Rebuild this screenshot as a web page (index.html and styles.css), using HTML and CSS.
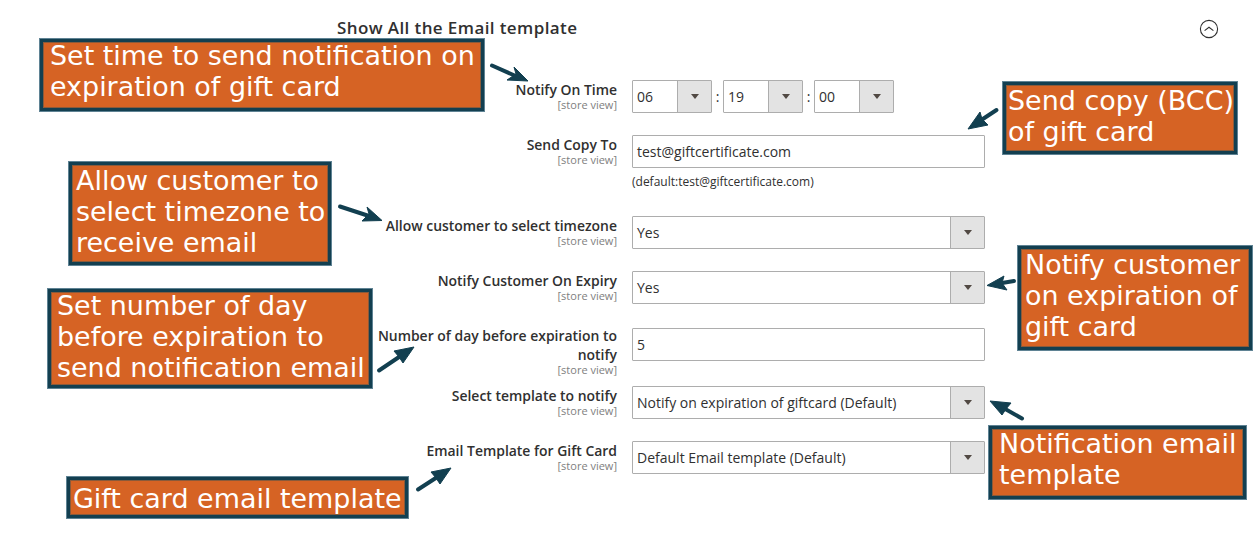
FILE: index.html
```html
<!DOCTYPE html>
<html lang="en">
<head>
    <meta charset="UTF-8">
    <title>Show All the Email template</title>
    <link rel="stylesheet" href="styles.css">
</head>
<body>
    <main class="page">
        <header class="section-head">
            <h2>Show All the Email template</h2>
            <svg class="toggle" width="20" height="20" viewBox="0 0 20 20" fill="none" stroke="#303030">
                <circle cx="10" cy="10" r="8.6" stroke-width="1.1"/>
                <path d="M5.6 11.6 10 8.2l4.4 3.4" stroke-width="1.1"/>
            </svg>
        </header>

        <form class="fields">
            <div class="row">
                <div class="label">Notify On Time<small>[store view]</small></div>
                <div class="control time">
                    <div class="select small"><span>06</span><i></i></div>
                    <b>:</b>
                    <div class="select small"><span>19</span><i></i></div>
                    <b>:</b>
                    <div class="select small"><span>00</span><i></i></div>
                </div>
            </div>
            <div class="row">
                <div class="label">Send Copy To<small>[store view]</small></div>
                <div class="control">
                    <div class="input">test@giftcertificate.com</div>
                    <p class="note">(default:test@giftcertificate.com)</p>
                </div>
            </div>
            <div class="row">
                <div class="label">Allow customer to select timezone<small>[store view]</small></div>
                <div class="control">
                    <div class="select"><span>Yes</span><i></i></div>
                </div>
            </div>
            <div class="row row-expiry">
                <div class="label">Notify Customer On Expiry<small>[store view]</small></div>
                <div class="control">
                    <div class="select"><span>Yes</span><i></i></div>
                </div>
            </div>
            <div class="row row-days">
                <div class="label">Number of day before expiration to notify<small>[store view]</small></div>
                <div class="control">
                    <div class="input">5</div>
                </div>
            </div>
            <div class="row">
                <div class="label">Select template to notify<small>[store view]</small></div>
                <div class="control">
                    <div class="select"><span>Notify on expiration of giftcard (Default)</span><i></i></div>
                </div>
            </div>
            <div class="row">
                <div class="label">Email Template for Gift Card<small>[store view]</small></div>
                <div class="control">
                    <div class="select"><span>Default Email template (Default)</span><i></i></div>
                </div>
            </div>
        </form>
    </main>

    <!-- annotations drawn over the form -->
    <div class="callout c-time"><span>Set time to send notification on<br>expiration of gift card</span></div>
    <div class="callout c-copy"><span>Send copy (BCC)<br>of gift card</span></div>
    <div class="callout c-zone"><span>Allow customer to<br>select timezone to<br>receive email</span></div>
    <div class="callout c-expiry"><span>Notify customer<br>on expiration of<br>gift card</span></div>
    <div class="callout c-days"><span>Set number of day<br>before expiration to<br>send notification email</span></div>
    <div class="callout c-notify"><span>Notification email<br>template</span></div>
    <div class="callout c-gift"><span>Gift card email template</span></div>

    <svg class="arrows" width="1258" height="538" viewBox="0 0 1258 538">
        <g fill="#123f50" stroke="#123f50">
            <path d="M492 65.500 518 77" stroke-width="4" stroke-linecap="round"/>
            <path d="M528 81 514 67 516 74 507 80Z" stroke-width="1"/>
            <path d="M996.500 110 976 123.500" stroke-width="4" stroke-linecap="round"/>
            <path d="M968 129 980 112 982 119 988 125Z" stroke-width="1"/>
            <path d="M340 206.500 372 217" stroke-width="4" stroke-linecap="round"/>
            <path d="M382 220.500 367 207 369 214 362 221Z" stroke-width="1"/>
            <path d="M1014 281 996 284" stroke-width="4" stroke-linecap="round"/>
            <path d="M987 285.500 1004 276 1002 283 1007 290Z" stroke-width="1"/>
            <path d="M1022 418.500 1000 406" stroke-width="4" stroke-linecap="round"/>
            <path d="M990 401 1011 403 1006 409 1002 415Z" stroke-width="1"/>
            <path d="M379 370.500 405 353" stroke-width="4" stroke-linecap="round"/>
            <path d="M414 347 394 351 399 357 403 363Z" stroke-width="1"/>
            <path d="M418 489.500 442 474" stroke-width="4" stroke-linecap="round"/>
            <path d="M451 468 431 472 436 478 440 484Z" stroke-width="1"/>
        </g>
    </svg>
</body>
</html>
```

FILE: styles.css
```css
body {
    margin: 0;
    background-color: #fff;
    font-family: "Open Sans", sans-serif;
    color: #303030;
}

.page {
    width: 1258px;
    height: 538px;
    overflow: hidden;
}

.section-head {
    display: flex;
    justify-content: space-between;
    align-items: center;
    height: 20px;
    padding: 19px 39px 0 337px;
}

.section-head h2 {
    margin: -4px 0 0;
    font-size: 17px;
    font-weight: 600;
    letter-spacing: 0.4px;
}

.fields {
    display: flex;
    flex-direction: column;
    padding-top: 41px;
}

.row {
    display: flex;
    gap: 15px;
    padding-bottom: 22px;
}

.row-expiry {
    padding-bottom: 24px;
}

.row-days {
    padding-bottom: 0;
    height: 58px;
}

.row-days .label {
    margin-top: -2px;
}

.label {
    width: 247px;
    margin-left: 370px;
    text-align: right;
    font-size: 13.950px;
    font-weight: 600;
    line-height: 19px;
}

.label small {
    display: block;
    font-size: 11px;
    font-weight: 400;
    line-height: 11px;
    color: #808080;
}

.control {
    width: 353px;
    font-size: 14px;
}

.time {
    display: flex;
    align-items: flex-start;
}

.time b {
    width: 11px;
    line-height: 33px;
    text-align: center;
    font-weight: 400;
}

.select,
.input {
    display: flex;
    align-items: center;
    box-sizing: border-box;
    height: 33px;
    border: 1px solid #adadad;
    border-radius: 1px;
    background-color: #fff;
}

.select span,
.input {
    padding-left: 4px;
}

.select span {
    flex: 1;
}

.select i {
    display: flex;
    align-items: center;
    justify-content: center;
    box-sizing: border-box;
    width: 34px;
    height: 100%;
    padding-left: 1px;
    border-left: 1px solid #adadad;
    background-color: #e3e3e3;
}

.select i::after {
    content: "";
    border-top: 5px solid #514943;
    border-left: 4px solid transparent;
    border-right: 4px solid transparent;
}

.select.small {
    width: 80px;
}

.note {
    margin: 6px 0 5px;
    font-size: 12px;
    line-height: 15px;
}

.callout {
    position: absolute;
    box-sizing: border-box;
    border: 4px solid #133f50;
    outline: 1px solid #5f8394;
    outline-offset: -1px;
    box-shadow: inset 0 0 0 1px #8a5a3a;
    background-color: #d66324;
    color: #fff;
    font-family: "DejaVu Sans", sans-serif;
    font-size: 26.950px;
    line-height: 31px;
    white-space: nowrap;
}

.callout span {
    display: block;
}

.c-time { left: 39px; top: 38px; width: 446px; height: 74px; padding-left: 7px; }
.c-time span { margin-top: -2px; }
.c-copy { left: 1002px; top: 81px; width: 236px; height: 74px; padding-left: 2px; }
.c-zone { left: 68px; top: 161px; width: 264px; height: 105px; padding-left: 4px; }
.c-expiry { left: 1017px; top: 245px; width: 236px; height: 106px; padding-left: 4px; }
.c-days { left: 47px; top: 288px; width: 326px; height: 101px; padding-left: 6px; }
.c-days span { margin-top: -2px; }
.c-notify { left: 988px; top: 425px; width: 259px; height: 75px; padding-left: 7px; }
.c-notify span { margin-top: -1px; }
.c-gift { left: 66px; top: 476px; width: 343px; height: 43px; padding-left: 3px; }
.c-gift span { margin-top: 3px; }

.arrows {
    position: absolute;
    left: 0;
    top: 0;
    pointer-events: none;
}
```
